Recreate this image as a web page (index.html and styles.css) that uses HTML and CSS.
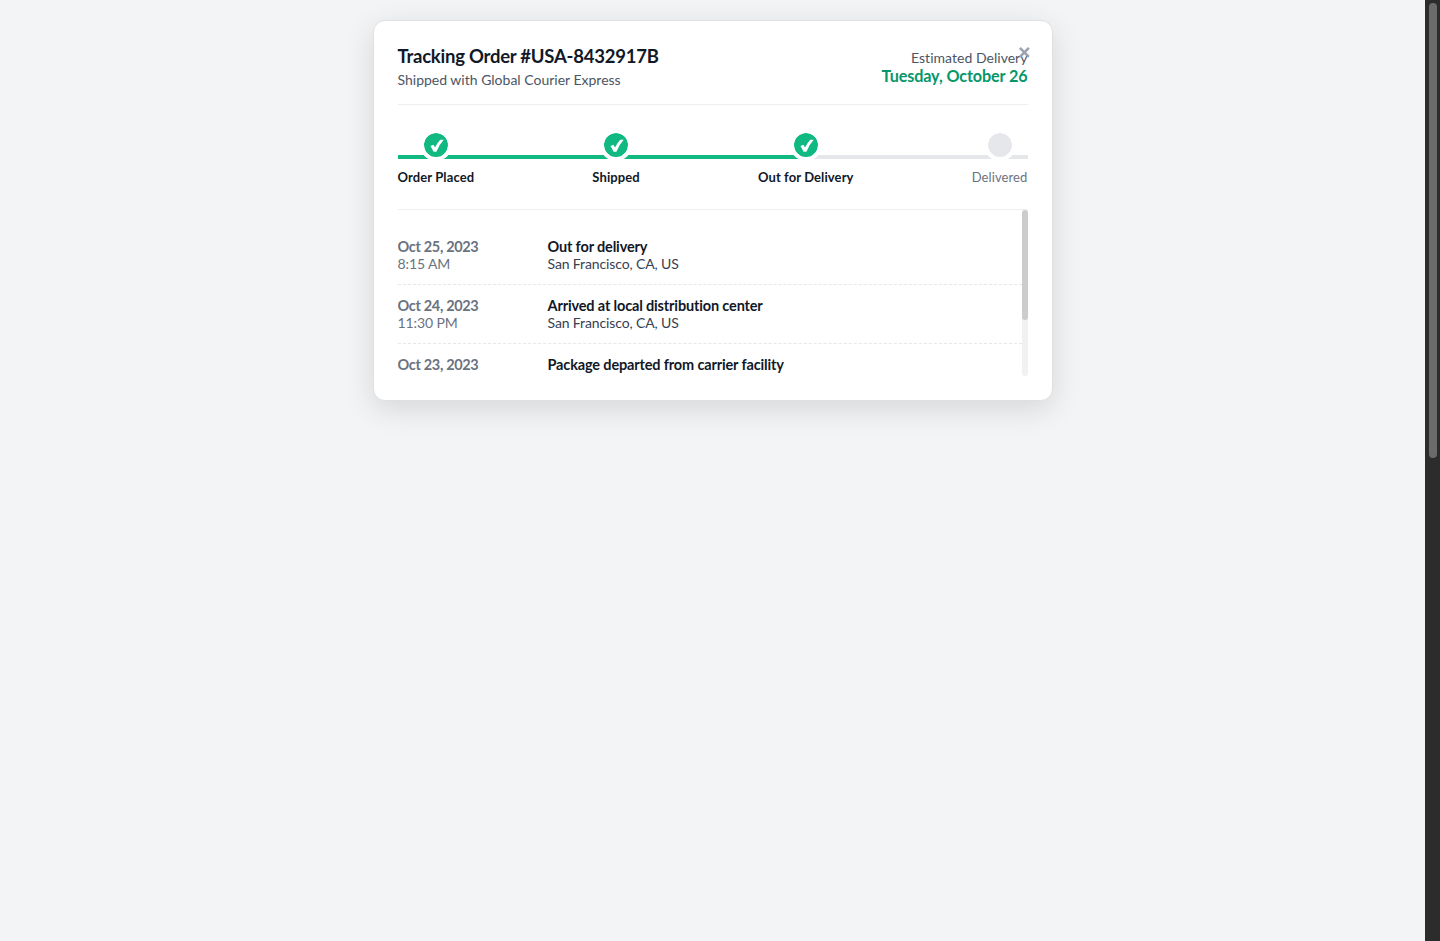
FILE: index.html
```html
<!DOCTYPE html>
<html lang="en">
<head>
<meta charset="utf-8">
<title>Order Tracking</title>
<link rel="stylesheet" href="styles.css">
</head>
<body>
<main class="page">
  <section class="card">
    <span class="close"><svg width="13" height="13" viewBox="0 0 13 13"><path d="M1.9 1.9 10.9 10.9M10.9 1.9 1.9 10.9" stroke="#9ca3af" stroke-width="2.6" fill="none"/></svg></span>
    <header class="header">
      <div>
        <h1 class="title">Tracking Order #USA-8432917B</h1>
        <p class="carrier">Shipped with Global Courier Express</p>
      </div>
      <div class="estimate">
        <p class="estimate-label">Estimated Delivery</p>
        <p class="estimate-date">Tuesday, October 26</p>
      </div>
    </header>
    <div class="progress">
      <div class="line"><div class="line-fill"></div></div>
      <div class="step done"><div class="dot"><svg class="check" viewBox="0 0 14 14"><path d="M.5 7.1 3.4 5.8 5 8.6Q7.7 3.2 10.3.7L13.7.7Q9.2 5.5 6.4 12.8L3.6 12.8Z"/></svg></div><span>Order Placed</span></div>
      <div class="step done"><div class="dot"><svg class="check" viewBox="0 0 14 14"><path d="M.5 7.1 3.4 5.8 5 8.6Q7.7 3.2 10.3.7L13.7.7Q9.2 5.5 6.4 12.8L3.6 12.8Z"/></svg></div><span>Shipped</span></div>
      <div class="step done"><div class="dot"><svg class="check" viewBox="0 0 14 14"><path d="M.5 7.1 3.4 5.8 5 8.6Q7.7 3.2 10.3.7L13.7.7Q9.2 5.5 6.4 12.8L3.6 12.8Z"/></svg></div><span>Out for Delivery</span></div>
      <div class="step"><div class="dot"></div><span>Delivered</span></div>
    </div>
    <div class="history">
      <div class="events">
        <div class="event"><div class="when"><strong>Oct 25, 2023</strong><span>8:15 AM</span></div><div class="what"><strong>Out for delivery</strong><span>San Francisco, CA, US</span></div></div>
        <div class="event"><div class="when"><strong>Oct 24, 2023</strong><span>11:30 PM</span></div><div class="what"><strong>Arrived at local distribution center</strong><span>San Francisco, CA, US</span></div></div>
        <div class="event"><div class="when"><strong>Oct 23, 2023</strong></div><div class="what"><strong>Package departed from carrier facility</strong></div></div>
      </div>
      <div class="track"><div class="thumb"></div></div>
    </div>
  </section>
</main>
<aside class="page-track"><div class="page-thumb"></div></aside>
</body>
</html>
```

FILE: styles.css
```css
* { box-sizing: border-box; }
body {
  margin: 0;
  display: flex;
  height: 941px;
  overflow: hidden;
  background: #f3f4f6;
  font-family: Lato, "Liberation Sans", sans-serif;
  font-size: 14px;
  line-height: 17px;
  font-variant-ligatures: none;
  color: #111827;
}
h1, p { margin: 0; }
.page { flex: 1; padding-top: 20px; }
.card {
  position: relative;
  width: 680px;
  height: 381px;
  margin: 0 auto;
  padding: 24px;
  background: #fff;
  border: 1px solid #e0e0e0;
  border-radius: 12px;
  box-shadow: 0 8px 30px rgba(0, 0, 0, .12);
}
.close { position: absolute; top: 25px; right: 21px; width: 13px; height: 13px; }
.close svg { display: block; }
.header {
  display: flex;
  justify-content: space-between;
  align-items: center;
  height: 60px;
  padding-bottom: 16px;
  border-bottom: 1px solid #eee;
}
.title { font-size: 18.5px; line-height: 22px; font-weight: 700; letter-spacing: -.24px; }
.carrier { margin-top: 4px; color: #4b5563; }
.estimate { text-align: right; padding-top: 1px; }
.estimate-label { color: #4b5563; letter-spacing: .03px; }
.estimate-date { font-size: 16.2px; line-height: 20px; font-weight: 700; letter-spacing: -.12px; color: #059669; }
.progress {
  position: relative;
  display: flex;
  justify-content: space-between;
  margin: 24px 0;
  height: 56px;
}
.line { position: absolute; top: 26px; left: 0; width: 100%; height: 4px; background: #e5e7eb; }
.line-fill { width: 66%; height: 100%; background: #10b981; }
.step {
  position: relative;
  display: flex;
  flex-direction: column;
  align-items: center;
  gap: 8px;
  font-size: 13px;
  line-height: 16px;
  letter-spacing: .1px;
  color: #6b7280;
}
.done { color: #111827; font-weight: 700; }
.dot {
  display: flex;
  align-items: center;
  justify-content: center;
  width: 32px;
  height: 32px;
  border: 4px solid #fff;
  border-radius: 50%;
  background: #e5e7eb;
  background-clip: padding-box;
}
.done .dot { background-color: #10b981; }
.check { width: 14px; height: 14px; margin: 2px 0 0 2px; fill: #fff; }
.history { display: flex; height: 167px; border-top: 1px solid #eee; overflow: hidden; }
.events { flex: 1; padding-top: 16px; }
.event { display: flex; height: 59px; padding: 12px 0; border-bottom: 1px dashed #e5e7eb; }
.when { width: 150px; color: #6b7280; letter-spacing: -.1px; }
.when, .what { display: flex; flex-direction: column; }
.event strong { font-size: 14.5px; font-weight: 700; letter-spacing: -.15px; }
.when strong { letter-spacing: -.33px; }
.what span { color: #374151; letter-spacing: -.12px; }
.track { width: 6px; height: 166px; border-radius: 3px; background: #f1f1f1; }
.thumb { height: 110px; border-radius: 3px; background: #ccc; }
.page-track { width: 15px; height: 941px; padding: 3px 3px 0 4px; background: #2c2c2c; }
.page-thumb { height: 455px; border-radius: 4px; background: #6b6b6b; }
```
